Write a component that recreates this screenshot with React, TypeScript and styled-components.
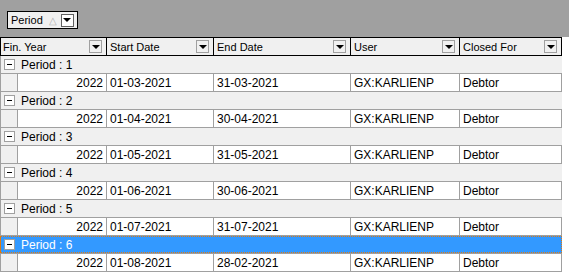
import React from 'react'
import styled, { createGlobalStyle } from 'styled-components'

const GlobalStyle = createGlobalStyle`
  body {
    margin: 0;
    background: #ffffff;
    font-family: 'Liberation Sans', Arial, sans-serif;
    font-size: 11px;
    color: #000000;
  }
`

type Column = { key: string; title: string; width: number; align?: 'left' | 'right' }

const columns: Column[] = [
  { key: 'year', title: 'Fin. Year', width: 107, align: 'right' },
  { key: 'start', title: 'Start Date', width: 107 },
  { key: 'end', title: 'End Date', width: 137 },
  { key: 'user', title: 'User', width: 109 },
  { key: 'closed', title: 'Closed For', width: 102 },
]

const periods = [
  { no: 1, start: '01-03-2021', end: '31-03-2021' },
  { no: 2, start: '01-04-2021', end: '30-04-2021' },
  { no: 3, start: '01-05-2021', end: '31-05-2021' },
  { no: 4, start: '01-06-2021', end: '30-06-2021' },
  { no: 5, start: '01-07-2021', end: '31-07-2021' },
  { no: 6, start: '01-08-2021', end: '28-02-2021' },
]

const Page = styled.div`
  width: 569px;
  height: 277px;
  overflow: hidden;
`

const GroupBar = styled.div`
  height: 37px;
  background: #a0a0a0;
  box-sizing: border-box;
  padding: 11px 0 0 7px;
`

const GroupChip = styled.div`
  display: inline-flex;
  align-items: center;
  height: 18px;
  box-sizing: border-box;
  border: 1px solid #000000;
  background: #f0f0f0;
  padding: 0 3px 0 3px;
  gap: 4px;
`

const SortMark = styled.span`
  color: #b0b0b0;
  font-size: 10px;
  margin-left: 2px;
`

const DropButton = styled.span<{ $dark?: boolean }>`
  display: inline-flex;
  align-items: center;
  justify-content: center;
  width: 13px;
  height: 13px;
  box-sizing: border-box;
  border: 1px solid ${({ $dark }) => ($dark ? '#606060' : '#a0a0a0')};
  background: ${({ $dark }) => ($dark ? '#ffffff' : '#f0f0f0')};
  &::after {
    content: '';
    border-left: 4px solid transparent;
    border-right: 4px solid transparent;
    border-top: 4px solid #000000;
  }
`

const Grid = styled.div`
  width: 562px;
`

const HeaderRow = styled.div`
  display: flex;
  height: 19px;
  box-sizing: border-box;
  border: 1px solid #000000;
  background: #f0f0f0;
`

const HeaderCell = styled.div<{ $width: number }>`
  display: flex;
  align-items: center;
  justify-content: space-between;
  width: ${({ $width }) => $width}px;
  box-sizing: border-box;
  padding: 0 4px 0 3px;
  border-right: 1px solid #000000;
  &:first-child {
    width: ${({ $width }) => $width - 1}px;
    padding-left: 2px;
  }
  &:last-child {
    border-right: none;
    width: ${({ $width }) => $width - 1}px;
  }
`

const GroupRow = styled.div<{ $selected?: boolean }>`
  display: flex;
  align-items: center;
  height: 17px;
  box-sizing: border-box;
  padding-left: 3px;
  gap: 6px;
  background: ${({ $selected }) => ($selected ? '#3399ff' : '#f0f0f0')};
  color: ${({ $selected }) => ($selected ? '#ffffff' : '#000000')};
  border-left: 1px solid ${({ $selected }) => ($selected ? '#e07a10' : '#a0a0a0')};
  outline: ${({ $selected }) => ($selected ? '1px dotted #e07a10' : 'none')};
  outline-offset: -1px;
  font-size: 12px;
`

const Expander = styled.span`
  display: inline-flex;
  align-items: center;
  justify-content: center;
  width: 11px;
  height: 11px;
  box-sizing: border-box;
  border: 1px solid #a0a0a0;
  background: #ffffff;
  &::after {
    content: '';
    width: 5px;
    height: 1px;
    background: #000000;
  }
`

const DataRow = styled.div`
  display: flex;
  height: 19px;
  box-sizing: border-box;
  border-top: 1px solid #a0a0a0;
  border-bottom: 1px solid #a0a0a0;
  border-left: 1px solid #a0a0a0;
  background: #ffffff;
`

const Indent = styled.div`
  width: 16px;
  background: #f0f0f0;
  border-right: 1px solid #a0a0a0;
`

const Cell = styled.div<{ $width: number; $align?: 'left' | 'right' }>`
  display: flex;
  align-items: center;
  justify-content: ${({ $align }) => ($align === 'right' ? 'flex-end' : 'flex-start')};
  width: ${({ $width }) => $width}px;
  box-sizing: border-box;
  padding: 0 3px 0 3px;
  border-right: 1px solid #a0a0a0;
  font-size: 12px;
`

const cellWidths = [89, 107, 137, 109, 102]

export default function App() {
  return (
    <Page>
      <GlobalStyle />
      <GroupBar>
        <GroupChip>
          <span>Period</span>
          <SortMark>△</SortMark>
          <DropButton $dark />
        </GroupChip>
      </GroupBar>
      <Grid>
        <HeaderRow>
          {columns.map((c) => (
            <HeaderCell key={c.key} $width={c.width}>
              <span>{c.title}</span>
              <DropButton />
            </HeaderCell>
          ))}
        </HeaderRow>
        {periods.map((p) => (
          <React.Fragment key={p.no}>
            <GroupRow $selected={p.no === 6}>
              <Expander />
              <span>Period : {p.no}</span>
            </GroupRow>
            <DataRow>
              <Indent />
              <Cell $width={cellWidths[0]} $align="right">2022</Cell>
              <Cell $width={cellWidths[1]}>{p.start}</Cell>
              <Cell $width={cellWidths[2]}>{p.end}</Cell>
              <Cell $width={cellWidths[3]}>GX:KARLIENP</Cell>
              <Cell $width={cellWidths[4]}>Debtor</Cell>
            </DataRow>
          </React.Fragment>
        ))}
      </Grid>
    </Page>
  )
}
